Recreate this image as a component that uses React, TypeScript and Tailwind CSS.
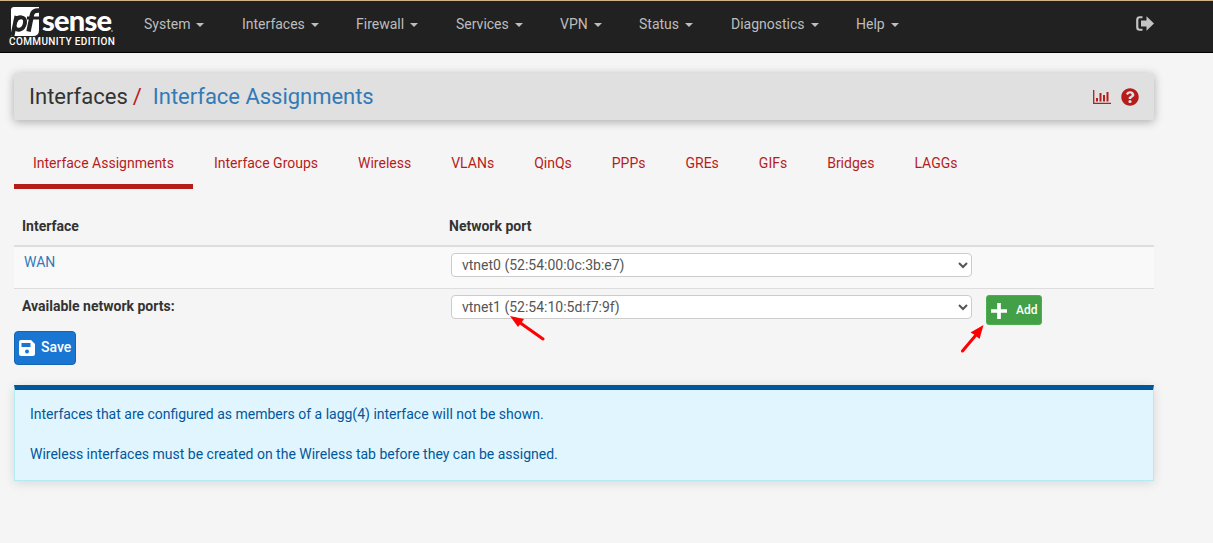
import React from "react";
import { FaQuestionCircle } from "react-icons/fa";

const menus = [
  { label: "System", width: "w-[98px]" },
  { label: "Interfaces", width: "w-[114px]" },
  { label: "Firewall", width: "w-[100px]" },
  { label: "Services", width: "w-[104px]" },
  { label: "VPN", width: "w-[79px]" },
  { label: "Status", width: "w-[92px]" },
  { label: "Diagnostics", width: "w-[125px]" },
  { label: "Help", width: "w-[60px]" },
];

const tabs = ["Interface Groups", "Wireless", "VLANs", "QinQs", "PPPs", "GREs", "GIFs", "Bridges", "LAGGs"];

function Logo() {
  return (
    <div className="ml-[9px] w-[135px] shrink-0 pt-[5px]">
      <div className="flex h-[30px]">
        <svg width="32" height="30" viewBox="0 0 32 30" className="block shrink-0">
          <path d="M5 1H30V24Q30 30 24 30H2V4Q2 1 5 1Z" fill="#fff" />
          <g fill="none" stroke="#212121">
            <path d="M7.500 10L3.400 30" strokeWidth="4" />
            <path d="M6.500 15.500C8.500 10 17.300 9.500 16 17C14.500 25 7 25.500 5.500 20.500" strokeWidth="4" />
            <path d="M19.500 25.500L23 8.500Q24 4 31 4.600" strokeWidth="4.400" />
            <path d="M18 12H30" strokeWidth="3" />
          </g>
        </svg>
        <span className="mt-[2px] inline-block h-[24px] w-[71px] pl-px font-[Lato,sans-serif] text-[29px] leading-[24px] font-black tracking-[-0.8px] text-white">sense</span>
        <span className="mt-[24px] -ml-px size-[2px] shrink-0 rounded-full bg-[#888]" />
      </div>
      <div className="whitespace-nowrap text-[10px] leading-[12px] font-medium tracking-[0.38px] text-white">COMMUNITY EDITION</div>
    </div>
  );
}

function PortSelect({ value }: { value: string }) {
  return (
    <select className="block h-6 w-[521px] rounded-[4px] border border-[#ccc] bg-white pl-[6px] text-[14px] text-[#555]">
      <option>{value}</option>
    </select>
  );
}

function Arrow({ d, head, className }: { d: string; head: string; className: string }) {
  return (
    <svg className={"pointer-events-none absolute " + className} viewBox="0 0 36 30" width="36" height="30">
      <path d={d} stroke="#f00" strokeWidth="3" strokeLinecap="round" />
      <path d={head} fill="#f00" />
    </svg>
  );
}

export default function App() {
  return (
    <div className="relative min-h-[543px] bg-[#f5f5f5] font-[Roboto,sans-serif] text-[14px] leading-5 text-[#333]">
      <header className="flex h-[53px] border-t border-b border-t-[#d2b48c] border-b-black bg-[#212121]">
        <Logo />
        <nav className="flex pt-[13px] text-[#bdbdbd]">
          {menus.map((m) => (
            <div key={m.label} className={"flex items-center self-start " + m.width}>
              <span>{m.label}</span>
              <span className="mt-px ml-[6px] border-x-4 border-t-4 border-x-transparent border-t-[#bdbdbd]" />
            </div>
          ))}
        </nav>
        <svg className="mt-[15px] ml-[220px]" width="18" height="15" viewBox="0 0 18 15" fill="#c4c4c4">
          <path d="M6.500 1.250H3.500Q1.250 1.250 1.250 4V11Q1.250 13.750 3.500 13.750H6.500" fill="none" stroke="#c4c4c4" strokeWidth="2.200" />
          <path d="M5 4.500H10.500V0.300L18 7.500L10.500 14.700V10.500H5Z" />
        </svg>
      </header>

      <main className="ml-[14px] w-[1140px] pt-5">
        <div className="flex h-[47px] items-center rounded-[2px] bg-[#e0e0e0] px-[15px] text-[22px] shadow-[0_2px_10px_rgba(0,0,0,0.3)]">
          <h1 className="flex grow">
            <span>Interfaces</span>
            <span className="ml-[5px] text-[#b71c1c]">/</span>
            <span className="ml-[11px] tracking-[-0.03px] text-[#337ab7]">Interface Assignments</span>
          </h1>
          <svg width="19" height="15" viewBox="0 0 19 15" stroke="#b71c1c" fill="none" className="mt-px mr-[9px]">
            <path d="M0.700 0V13.400H18" strokeWidth="1.300" />
            <path d="M4 8V11.500M7.500 3V11.500M11 5V11.500M14.500 2V11.500" strokeWidth="2" />
          </svg>
          <FaQuestionCircle size={18} color="#b71c1c" className="mt-px" />
        </div>

        <div className="mt-[22px] flex h-[47px] gap-10 text-[#b71c1c]">
          <div className="-mr-[19px] w-[179px] border-b-[5px] border-[#b71c1c] pt-[11px] pl-[19px]">Interface Assignments</div>
          {tabs.map((t) => (
            <div key={t} className="pt-[11px]">{t}</div>
          ))}
        </div>

        <div className="mt-[18px]">
          <div className="grid h-10 grid-cols-[427px_1fr] border-b-2 border-[#ddd] pt-[9px] pl-2 font-bold">
            <span>Interface</span>
            <span>Network port</span>
          </div>
          <div className="grid h-[41px] grid-cols-[427px_1fr] bg-[#f9f9f9] pt-[5px] pl-[10px]">
            <span className="text-[#337ab7]">WAN</span>
            <div className="pt-px">
              <PortSelect value="vtnet0 (52:54:00:0c:3b:e7)" />
            </div>
          </div>
          <div className="grid h-[43px] grid-cols-[429px_535px_1fr] border-t border-[#ddd] pt-[6px] pl-2">
            <span className="pt-[1px] font-bold">Available network ports:</span>
            <PortSelect value="vtnet1 (52:54:10:5d:f7:9f)" />
            <button className="flex h-[30px] w-14 items-center rounded-[3px] border border-[#4caf50] bg-[#43a047] pl-[3px] text-[12px] font-medium text-white">
              <svg width="18" height="18" viewBox="0 0 18 18" className="mt-[2px]">
                <path d="M9 1V17M1 9H17" stroke="#fff" strokeWidth="3.700" />
              </svg>
              <span className="ml-[8px]">Add</span>
            </button>
          </div>
        </div>

        <button className="flex h-[34px] w-[62px] items-center rounded-[4px] border border-[#1565b0] bg-[#1976d2] pl-1 font-medium text-white">
          <svg width="16" height="16" viewBox="0 0 16 16" fillRule="evenodd">
            <path d="M2 0H12L16 4V14Q16 16 14 16H2Q0 16 0 14V2Q0 0 2 0ZM2.500 3V7H11.500V3ZM8 9.500A2 2 0 1 0 8 13.500A2 2 0 1 0 8 9.500Z" fill="#fff" />
          </svg>
          <span className="-mt-[2px] ml-[6px]">Save</span>
        </button>

        <div className="mt-5 h-24 border border-t-[5px] border-[#b2ebf2] border-t-[#01579b] bg-[#e1f5fe] px-[15px] pt-[14px] text-[#01579b] shadow-[0_2px_10px_rgba(0,0,0,0.12)]">
          <p>Interfaces that are configured as members of a lagg(4) interface will not be shown.</p>
          <p className="mt-5">Wireless interfaces must be created on the Wireless tab before they can be assigned.</p>
        </div>
      </main>

      <Arrow className="top-[314px] left-[509px]" d="M10 8L34 25" head="M1 2L15 5L12.500 8.500L9 13Z" />
      <Arrow className="top-[323px] left-[958px]" d="M4.500 28L18 12" head="M25.500 2L21.500 16L17 12L12.500 9.500Z" />
    </div>
  );
}
